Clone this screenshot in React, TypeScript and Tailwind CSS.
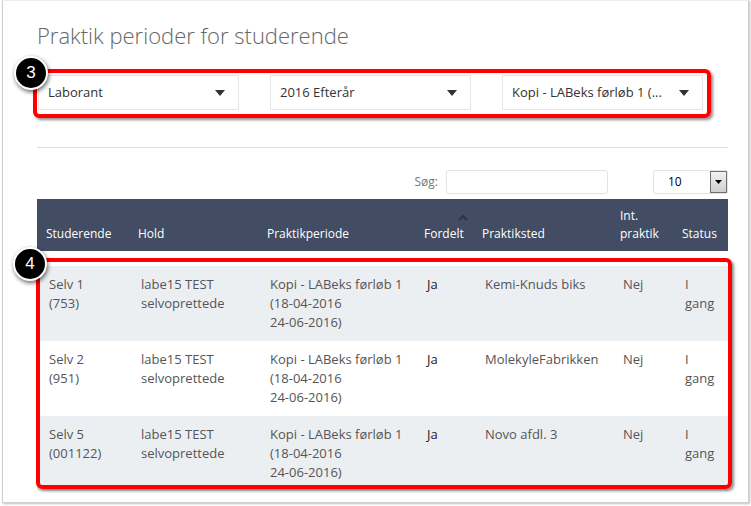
import React from 'react'

const rows = [
  { name: 'Selv 1', id: '(753)', place: 'Kemi-Knuds biks', bg: 'bg-[#eceff2]' },
  { name: 'Selv 2', id: '(951)', place: 'MolekyleFabrikken', bg: 'bg-white' },
  { name: 'Selv 5', id: '(001122)', place: 'Novo afdl. 3', bg: 'bg-[#eceff2]' },
]

function Caret() {
  return (
    <svg width="10" height="6" viewBox="0 0 10 6" className="shrink-0">
      <path d="M0 0h10L5 6z" fill="#333" />
    </svg>
  )
}

function Select({ label }: { label: string }) {
  return (
    <div className="flex h-[35px] w-[201px] items-center justify-between border border-[#e6e6e6] bg-white pl-[9px] pr-[13px] text-[13px] text-[#333]">
      <span className="truncate">{label}</span>
      <Caret />
    </div>
  )
}

function Badge({ n, className }: { n: string; className: string }) {
  return (
    <div
      className={`absolute flex h-[34px] w-[34px] items-center justify-center rounded-full border-[2px] border-white bg-black text-[17px] text-white shadow-[1px_2px_4px_rgba(0,0,0,0.6)] ${className}`}
      style={{ fontFamily: '"Liberation Sans", Arial, sans-serif' }}
    >
      {n}
    </div>
  )
}

export default function App() {
  return (
    <div className="h-[506px] w-[751px] bg-white" style={{ fontFamily: '"Open Sans", sans-serif' }}>
      <div className="relative ml-[2px] h-[503px] w-[747px] border border-[#cfcfcf] border-t-[#ececec] bg-white pl-[34px] pr-[20px] pt-[19px] shadow-[1px_1px_2px_rgba(0,0,0,0.25)]">
        <h1 className="text-[22px] font-light leading-[30px] text-[#666]">Praktik perioder for studerende</h1>

        {/* filters */}
        <div className="mt-[25px] flex gap-[31px] pl-[1px]">
          <Select label="Laborant" />
          <Select label="2016 Efterår" />
          <Select label="Kopi - LABeks førløb 1 (..." />
        </div>

        <div className="mt-[37px] h-px w-[691px] bg-[#dedede]" />

        {/* search + page size */}
        <div className="mt-[22px] flex h-[23px] w-[691px] items-center justify-end">
          <span className="mr-[8px] text-[12px] text-[#777]">Søg:</span>
          <div className="h-[24px] w-[162px] rounded-[3px] border border-[#e3e3e3]" />
          <div className="ml-[45px] flex h-[24px] w-[75px] items-center rounded-[3px] border border-[#e3e3e3] pl-[14px] text-[12px] text-black">
            <span className="flex-1">10</span>
            <div className="flex h-[22px] w-[17px] items-center justify-center border border-[#707070] bg-gradient-to-b from-[#f2f2f2] to-[#cfcfcf]">
              <svg width="7" height="4" viewBox="0 0 7 4">
                <path d="M0 0h7L3.5 4z" fill="#000" />
              </svg>
            </div>
          </div>
        </div>

        {/* table */}
        <table className="mt-[6px] w-[691px] table-fixed border-collapse text-[13px] leading-[19px]">
          <colgroup>
            <col className="w-[92px]" />
            <col className="w-[129px]" />
            <col className="w-[157px]" />
            <col className="w-[58px]" />
            <col className="w-[138px]" />
            <col className="w-[62px]" />
            <col className="w-[55px]" />
          </colgroup>
          <thead>
            <tr className="h-[52px] bg-[#424d63] text-left align-bottom text-[12px] font-normal leading-[18px] text-white">
              <th className="pb-[8px] pl-[9px] font-normal">Studerende</th>
              <th className="pb-[8px] pl-[9px] font-normal">Hold</th>
              <th className="pb-[8px] pl-[9px] font-normal">Praktikperiode</th>
              <th className="relative pb-[8px] pl-[9px] font-normal">
                <svg width="10" height="6" viewBox="0 0 10 6" className="absolute right-[5px] top-[16px]">
                  <path d="M1 5l4-4 4 4" stroke="#2c3444" strokeWidth="2" fill="none" />
                </svg>
                Fordelt
              </th>
              <th className="pb-[8px] pl-[9px] font-normal">Praktiksted</th>
              <th className="pb-[8px] pl-[9px] font-normal">
                Int.
                <br />
                praktik
              </th>
              <th className="pb-[8px] pl-[9px] font-normal">Status</th>
            </tr>
          </thead>
          <tbody className="text-[#555]">
            <tr className="h-[15px]">
              <td colSpan={7} />
            </tr>
            {rows.map((r) => (
              <tr key={r.name} className={`${r.bg} align-top`}>
                <td className="py-[9px] pl-[12px]">
                  {r.name}
                  <br />
                  {r.id}
                </td>
                <td className="py-[9px] pl-[12px]">
                  labe15 TEST
                  <br />
                  selvoprettede
                </td>
                <td className="py-[9px] pl-[12px]">
                  Kopi - LABeks førløb 1
                  <br />
                  (18-04-2016
                  <br />
                  24-06-2016)
                </td>
                <td className="py-[9px] pl-[12px] text-[#222]">Ja</td>
                <td className="py-[9px] pl-[12px]">{r.place}</td>
                <td className="py-[9px] pl-[12px]">Nej</td>
                <td className="py-[9px] pl-[12px]">
                  I
                  <br />
                  gang
                </td>
              </tr>
            ))}
          </tbody>
        </table>

        {/* annotations */}
        <div className="pointer-events-none absolute left-[30px] top-[68px] h-[49px] w-[678px] rounded-[6px] border-[4px] border-[#ff0000] shadow-[2px_2px_3px_rgba(0,0,0,0.45)]" />
        <Badge n="3" className="left-[11px] top-[55px]" />
        <div className="pointer-events-none absolute left-[33px] top-[257px] h-[231px] w-[696px] rounded-[6px] border-[4px] border-[#ff0000] shadow-[2px_2px_3px_rgba(0,0,0,0.45)]" />
        <Badge n="4" className="left-[10px] top-[246px]" />
      </div>
    </div>
  )
}
